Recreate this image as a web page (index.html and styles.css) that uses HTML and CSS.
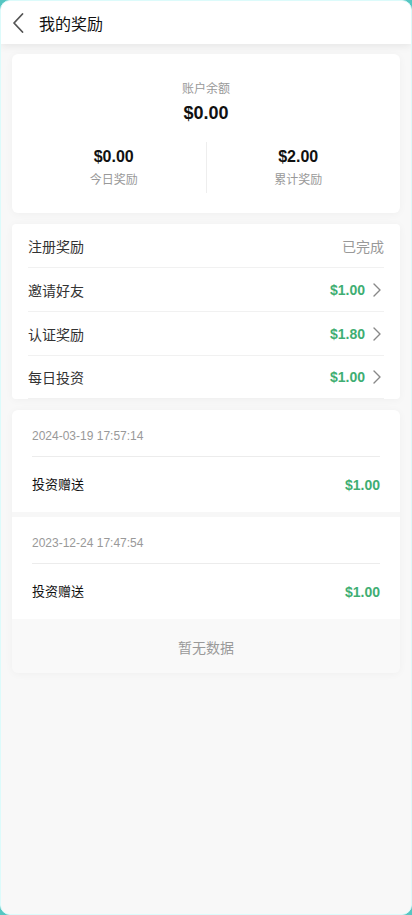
FILE: index.html
```html
<!DOCTYPE html>
<html lang="zh-CN">
<head>
<meta charset="utf-8">
<meta name="viewport" content="width=device-width, initial-scale=1">
<title>我的奖励</title>
<link rel="stylesheet" href="styles.css">
</head>
<body>
<div class="app">
  <header class="topbar">
    <span class="back">
      <svg width="14" height="22" viewBox="0 0 14 22"><path d="M11.5 2 L3 11 L11.5 20" fill="none" stroke="#555" stroke-width="1.8" stroke-linecap="round" stroke-linejoin="round"/></svg>
    </span>
    <h1 class="title">我的奖励</h1>
  </header>
  <main class="content">
    <section class="card summary">
      <div class="label">账户余额</div>
      <div class="balance">$0.00</div>
      <div class="stats">
        <div class="stat">
          <div class="stat-value">$0.00</div>
          <div class="label">今日奖励</div>
        </div>
        <div class="stat">
          <div class="stat-value">$2.00</div>
          <div class="label">累计奖励</div>
        </div>
      </div>
    </section>

    <section class="card list">
      <div class="row">
        <span class="row-name">注册奖励</span>
        <span class="done">已完成</span>
      </div>
      <div class="row">
        <span class="row-name">邀请好友</span>
        <span class="row-right"><span class="money">$1.00</span><svg class="chev" width="10" height="16" viewBox="0 0 10 16"><path d="M2 2 L8 8 L2 14" fill="none" stroke="#888" stroke-width="1.4" stroke-linecap="round" stroke-linejoin="round"/></svg></span>
      </div>
      <div class="row">
        <span class="row-name">认证奖励</span>
        <span class="row-right"><span class="money">$1.80</span><svg class="chev" width="10" height="16" viewBox="0 0 10 16"><path d="M2 2 L8 8 L2 14" fill="none" stroke="#888" stroke-width="1.4" stroke-linecap="round" stroke-linejoin="round"/></svg></span>
      </div>
      <div class="row">
        <span class="row-name">每日投资</span>
        <span class="row-right"><span class="money">$1.00</span><svg class="chev" width="10" height="16" viewBox="0 0 10 16"><path d="M2 2 L8 8 L2 14" fill="none" stroke="#888" stroke-width="1.4" stroke-linecap="round" stroke-linejoin="round"/></svg></span>
      </div>
    </section>

    <section class="card records">
      <div class="record">
        <div class="rec-date">2024-03-19 17:57:14</div>
        <div class="rec-line">
          <span class="rec-name">投资赠送</span>
          <span class="money">$1.00</span>
        </div>
      </div>
      <div class="record">
        <div class="rec-date">2023-12-24 17:47:54</div>
        <div class="rec-line">
          <span class="rec-name">投资赠送</span>
          <span class="money">$1.00</span>
        </div>
      </div>
      <div class="empty">暂无数据</div>
    </section>
  </main>
</div>
</body>
</html>
```
FILE: styles.css
```css
* { box-sizing: border-box; }
html, body {
  margin: 0;
  padding: 0;
  background: #56c6c2;
}
body {
  font-family: "Liberation Sans", "Noto Sans CJK SC", sans-serif;
  color: #222;
}
.app {
  width: 412px;
  height: 915px;
  background: #f8f8f8;
  border: 1px solid #dcfbfb;
  border-radius: 10px;
  overflow: hidden;
}
.topbar {
  height: 43px;
  background: #fff;
  display: flex;
  align-items: center;
  box-shadow: 0 2px 8px rgba(0, 0, 0, 0.08);
  position: relative;
  z-index: 1;
}
.back {
  width: 38px;
  padding-left: 10px;
  display: flex;
  align-items: center;
}
.title {
  margin: 0;
  font-size: 16px;
  font-weight: normal;
  color: #111;
}
.content {
  padding: 10px 11px;
  display: flex;
  flex-direction: column;
  gap: 11px;
}
.card {
  background: #fff;
  border-radius: 6px;
  box-shadow: 0 1px 8px rgba(0, 0, 0, 0.04);
}
.summary {
  padding: 27px 0 20px;
  text-align: center;
  height: 159px;
}
.label {
  font-size: 12px;
  line-height: 16px;
  color: #999;
}
.balance {
  margin-top: 4px;
  font-size: 18px;
  line-height: 24px;
  font-weight: bold;
  color: #111;
}
.stats {
  margin-top: 17px;
  padding: 0 10px;
  display: flex;
}
.stat {
  flex: 1;
  padding: 5px 0 5px;
}
.stat + .stat {
  border-left: 1px solid #eee;
}
.stat-value {
  font-size: 16px;
  line-height: 20px;
  font-weight: bold;
  color: #111;
  margin-bottom: 5px;
}
.list {
  padding: 0 16px;
  border-radius: 4px;
}
.row {
  height: 44px;
  display: flex;
  align-items: center;
  justify-content: space-between;
  border-bottom: 1px solid #f1f1f1;
  font-size: 14px;
}
.row:last-child {
  height: 43px;
}
.row-name { color: #333; }
.done { color: #999; }
.row-right {
  display: flex;
  align-items: center;
  gap: 7px;
  margin-right: 2px;
}
.money {
  font-size: 14px;
  font-weight: bold;
  color: #3fae73;
}
.records {
  overflow: hidden;
  background: #f7f7f7;
  display: flex;
  flex-direction: column;
  gap: 5px;
}
.record {
  background: #fff;
  padding: 16px 20px 17px;
}
.rec-date {
  font-size: 12px;
  line-height: 20px;
  color: #999;
  padding-bottom: 10px;
  border-bottom: 1px solid #ececec;
}
.rec-line {
  margin-top: 18px;
  line-height: 20px;
  display: flex;
  justify-content: space-between;
  align-items: center;
}
.rec-name {
  font-size: 13px;
  color: #111;
}
.empty {
  margin-top: -5px;
  background: #f9f9f9;
  text-align: center;
  font-size: 14px;
  line-height: 20px;
  color: #999;
  padding: 19px 0 15px;
}
```
